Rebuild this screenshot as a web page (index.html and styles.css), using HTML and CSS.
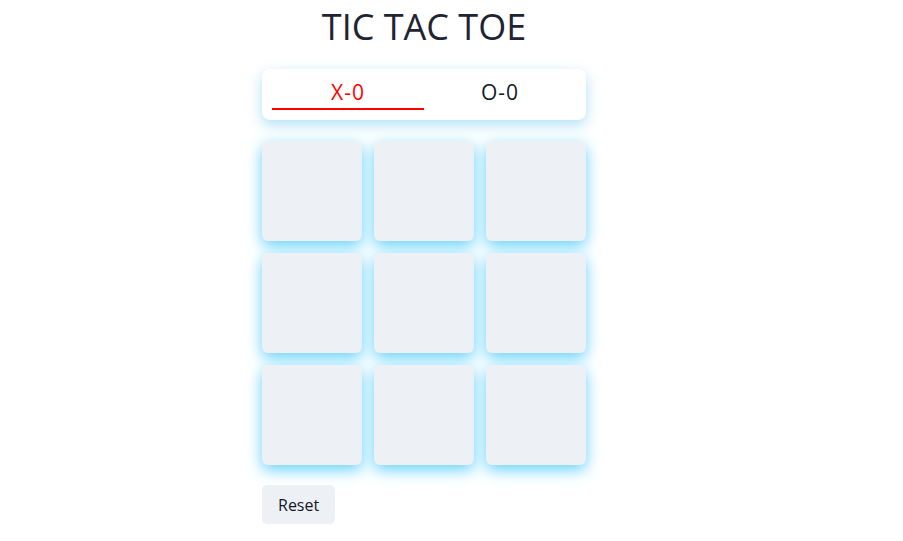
FILE: index.html
```html
<!DOCTYPE html>
<html lang="en">
<head>
    <meta charset="UTF-8">
    <meta name="viewport" content="width=device-width, initial-scale=1.0">
    <title>Tic Tac Toe</title>
    <link rel="stylesheet" href="styles.css">
</head>
<body>
    <div class="game">
        <h1 class="title">TIC TAC TOE</h1>

        <div class="score-card">
            <div class="score active">X-0</div>
            <div class="score">O-0</div>
        </div>

        <div class="board">
            <div class="cell"></div>
            <div class="cell"></div>
            <div class="cell"></div>
            <div class="cell"></div>
            <div class="cell"></div>
            <div class="cell"></div>
            <div class="cell"></div>
            <div class="cell"></div>
            <div class="cell"></div>
        </div>

        <button class="reset">Reset</button>
    </div>
</body>
</html>
```

FILE: styles.css
```css
body {
    margin: 0;
    font-family: "Open Sans", "Liberation Sans", sans-serif;
    background-color: #ffffff;
    color: #111827;
}
.game {
    width: 324px;
    margin-left: 262px;
    padding-top: 5px;
}
.title {
    margin: 0;
    text-align: center;
    font-size: 36px;
    font-weight: 400;
    line-height: 44px;
    color: #1f2433;
}
.score-card {
    display: flex;
    margin-top: 20px;
    padding: 0 10px;
    height: 51px;
    background-color: #ffffff;
    border-radius: 8px;
    box-shadow: 0 5px 14px rgba(100, 195, 240, 0.5);
}
.score {
    flex: 1;
    display: flex;
    align-items: center;
    justify-content: center;
    font-size: 21px;
    letter-spacing: 1px;
    padding-top: 6px;
    border-bottom: 2px solid transparent;
    margin-bottom: 10px;
}
.score.active {
    color: #ff0000;
    border-bottom-color: #ff0000;
}
.board {
    display: grid;
    grid-template-columns: repeat(3, 100px);
    grid-auto-rows: 100px;
    gap: 12px;
    margin-top: 21px;
}
.cell {
    background-color: #edf1f5;
    border-radius: 6px;
    box-shadow: 0 5px 15px #66d2ff;
}
.reset {
    margin-top: 20px;
    height: 39px;
    padding: 0 16px;
    font-family: inherit;
    font-size: 16px;
    color: #111827;
    background-color: #edf1f5;
    border: none;
    border-radius: 5px;
}
```
